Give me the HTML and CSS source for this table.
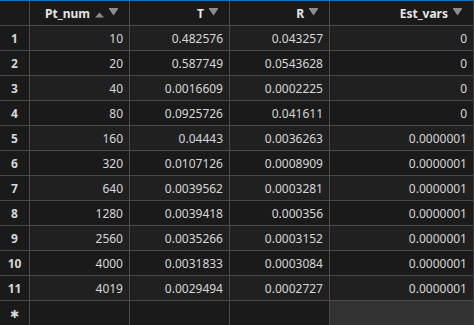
FILE: index.html
```html
<!DOCTYPE html>
<html>
<head>
<meta charset="utf-8">
<link rel="stylesheet" href="styles.css">
</head>
<body>
<div class="grid">
  <div class="hd idx"></div>
  <div class="hd"><span class="ht">Pt_num</span><svg class="sort" width="9" height="6" viewBox="0 0 9 6"><path d="M4.5 0.5 L9 5.5 L0 5.5 Z" fill="#8c8c8c"/></svg><svg class="filt" width="9" height="8" viewBox="0 0 9 8"><path d="M0 0 L9 0 L9 1 L4.5 7.5 L0 1 Z" fill="#8c8c8c"/></svg></div>
  <div class="hd"><span class="ht">T</span><svg class="filt" width="9" height="8" viewBox="0 0 9 8"><path d="M0 0 L9 0 L9 1 L4.5 7.5 L0 1 Z" fill="#8c8c8c"/></svg></div>
  <div class="hd"><span class="ht">R</span><svg class="filt" width="9" height="8" viewBox="0 0 9 8"><path d="M0 0 L9 0 L9 1 L4.5 7.5 L0 1 Z" fill="#8c8c8c"/></svg></div>
  <div class="hd"><span class="ht">Est_vars</span><svg class="filt" width="9" height="8" viewBox="0 0 9 8"><path d="M0 0 L9 0 L9 1 L4.5 7.5 L0 1 Z" fill="#8c8c8c"/></svg></div>

  <div class="idx">1</div><div class="c odd">10</div><div class="c odd">0.482576</div><div class="c odd">0.043257</div><div class="c odd">0</div>
  <div class="idx">2</div><div class="c">20</div><div class="c">0.587749</div><div class="c">0.0543628</div><div class="c">0</div>
  <div class="idx">3</div><div class="c odd">40</div><div class="c odd">0.0016609</div><div class="c odd">0.0002225</div><div class="c odd">0</div>
  <div class="idx">4</div><div class="c">80</div><div class="c">0.0925726</div><div class="c">0.041611</div><div class="c">0</div>
  <div class="idx">5</div><div class="c odd">160</div><div class="c odd">0.04443</div><div class="c odd">0.0036263</div><div class="c odd">0.0000001</div>
  <div class="idx">6</div><div class="c">320</div><div class="c">0.0107126</div><div class="c">0.0008909</div><div class="c">0.0000001</div>
  <div class="idx">7</div><div class="c odd">640</div><div class="c odd">0.0039562</div><div class="c odd">0.0003281</div><div class="c odd">0.0000001</div>
  <div class="idx">8</div><div class="c">1280</div><div class="c">0.0039418</div><div class="c">0.000356</div><div class="c">0.0000001</div>
  <div class="idx">9</div><div class="c odd">2560</div><div class="c odd">0.0035266</div><div class="c odd">0.0003152</div><div class="c odd">0.0000001</div>
  <div class="idx">10</div><div class="c">4000</div><div class="c">0.0031833</div><div class="c">0.0003084</div><div class="c">0.0000001</div>
  <div class="idx">11</div><div class="c odd">4019</div><div class="c odd">0.0029494</div><div class="c odd">0.0002727</div><div class="c odd">0.0000001</div>

  <div class="idx star">&#10033;</div><div class="c"></div><div class="c"></div><div class="c"></div><div class="c sel"></div>
</div>
</body>
</html>
```

FILE: styles.css
```css
html, body {
  margin: 0;
  padding: 0;
  background: #1a1a1a;
}
body {
  width: 474px;
  height: 325px;
  overflow: hidden;
  font-family: "Noto Sans", "Open Sans", sans-serif;
  font-size: 12px;
}
.grid {
  display: grid;
  grid-template-columns: 29px 99px 99px 99px 143px;
  grid-auto-rows: 24px;
  gap: 1px;
  background: #4a4a4a;
  border-top: 1px solid #0a74c8;
  border-right: 1px solid #3c3c3c;
  width: 473px;
}
.grid > div {
  background: #1a1a1a;
  color: #d6d6d6;
  display: flex;
  align-items: center;
}
.hd {
  justify-content: flex-end;
  padding-right: 11px;
  gap: 5px;
}
.ht {
  font-weight: 700;
  color: #e6e6e6;
}
.sort {
  margin-top: 3px;
}
.filt {
  margin-top: -2px;
}
.idx {
  justify-content: center;
  font-weight: 700;
  color: #e0e0e0;
}
.star {
  color: #a8a8a8;
  font-weight: 400;
  font-size: 11px;
}
.c {
  justify-content: flex-end;
  padding-right: 6px;
}
.grid > .odd {
  background: #202020;
}
.grid > .sel {
  background: #323232;
}
```
